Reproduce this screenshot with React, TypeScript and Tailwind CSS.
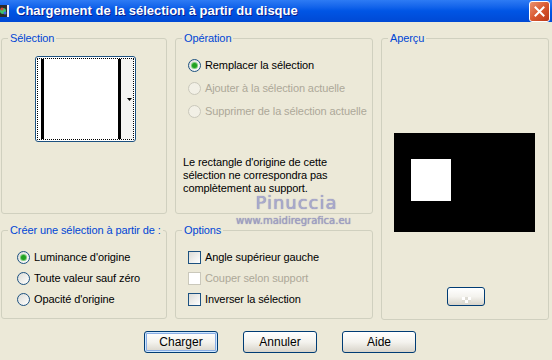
import React from "react";

// XP style "load selection" dialog

const groupBox = "border border-[#D0D0BF] rounded-[3px] m-0 p-0 min-w-0";
const legendCls = "ml-[6px] px-[2px] text-[#0046D5] leading-[14px] whitespace-nowrap";

const Radio: React.FC<{ checked?: boolean; disabled?: boolean }> = ({ checked, disabled }) => (
  <span
    className={
      disabled
        ? "w-[13px] h-[13px] rounded-full border border-[#CAC8BB] bg-[#F2F0E6] shrink-0"
        : "w-[13px] h-[13px] rounded-full border border-[#1C5180] bg-gradient-to-br from-[#DCDCD7] to-white shrink-0 flex items-center justify-center"
    }
  >
    {checked && <span className="w-[5px] h-[5px] rounded-full bg-[#21A121] shadow-[0_0_0_1px_#7BCB7B]" />}
  </span>
);

const Check: React.FC<{ disabled?: boolean }> = ({ disabled }) => (
  <span
    className={
      disabled
        ? "w-[13px] h-[13px] border border-[#CAC8BB] bg-white shrink-0"
        : "w-[13px] h-[13px] border border-[#1C5180] bg-gradient-to-br from-[#DCDCD7] to-white shrink-0"
    }
  />
);

const XpButton: React.FC<{ label: string; isDefault?: boolean }> = ({ label, isDefault }) => (
  <button
    className={
      isDefault
        ? "w-[74px] h-[22px] rounded-[3px] border border-[#003C74] bg-gradient-to-b from-white via-[#F4F3EE] to-[#D8D4CA] shadow-[inset_0_0_0_1px_#CEE7FF,inset_0_0_0_2px_#89ADE4] text-black text-[12px] leading-none"
        : "w-[74px] h-[22px] rounded-[3px] border border-[#003C74] bg-gradient-to-b from-white via-[#F4F3EE] to-[#D8D4CA] text-black text-[12px] leading-none"
    }
  >
    {label}
  </button>
);

export default function App() {
  return (
    <div className="relative w-[552px] h-[360px] overflow-hidden bg-[#ECE9D8] text-[11px] tracking-[-0.1px] text-black font-['Liberation_Sans',Arial,sans-serif] whitespace-nowrap">
      {/* title bar */}
      <div className="h-[22px] flex items-center bg-gradient-to-b from-[#2D7BF4] via-[#0055E5] to-[#0049D4] tracking-normal">
        <svg width="9" height="14" viewBox="0 0 9 14" className="shrink-0">
          <rect x="0" y="1" width="8" height="12" fill="#2a2a2a" />
          <circle cx="3" cy="7" r="3" fill="#3CC36E" />
          <circle cx="2" cy="5" r="1.5" fill="#D8473B" />
          <circle cx="5" cy="9" r="1.5" fill="#3F66E0" />
          <rect x="7" y="1" width="2" height="12" fill="#E8E8F4" />
        </svg>
        <span className="ml-[7px] text-white font-bold text-[13px] [text-shadow:1px_1px_0_#0A1E8C]">
          Chargement de la sélection à partir du disque
        </span>
        <div className="ml-auto mr-[2px] w-[21px] h-[21px] rounded-[3px] border border-white bg-gradient-to-br from-[#E99270] via-[#D9582F] to-[#BC3717] flex items-center justify-center">
          <svg width="11" height="11" viewBox="0 0 11 11">
            <path d="M1.5 1.5 L9.5 9.5 M9.5 1.5 L1.5 9.5" stroke="white" strokeWidth="2" strokeLinecap="square" />
          </svg>
        </div>
      </div>

      {/* groups */}
      <div className="flex gap-[8px] pl-[1px] pt-[9px]">
        <div className="w-[166px] flex flex-col gap-[9px]">
          <fieldset className={`${groupBox} h-[183px]`}>
            <legend className={legendCls}>Sélection</legend>
            <div className="ml-[33px] mt-[11px] relative w-[101px] h-[86px] rounded-[3px] border border-[#1C5180] bg-white flex items-stretch py-[2px] pl-[5px]">
              <div className="w-[3px] bg-black" />
              <div className="w-[74px] bg-white" />
              <div className="w-[3px] bg-black" />
              <div className="flex-1 bg-[#F4F4F2] mr-[2px] flex items-center justify-end pr-[1px]">
                <svg width="5" height="3" viewBox="0 0 5 3">
                  <path d="M0 0 H5 L2.5 3 Z" fill="black" />
                </svg>
              </div>
              <div className="absolute inset-[1px] border border-dotted border-black rounded-[1px]" />
            </div>
          </fieldset>
          <fieldset className={`${groupBox} h-[96px]`}>
            <legend className={legendCls}>Créer une sélection à partir de :</legend>
            <div className="mt-[9px] ml-[15px] flex flex-col">
              <label className="h-[22px] flex items-center gap-[4px]">
                <Radio checked />
                Luminance d'origine
              </label>
              <label className="h-[21px] flex items-center gap-[4px]">
                <Radio />
                Toute valeur sauf zéro
              </label>
              <label className="h-[21px] flex items-center gap-[4px]">
                <Radio />
                Opacité d'origine
              </label>
            </div>
          </fieldset>
        </div>

        <div className="w-[198px] flex flex-col gap-[9px]">
          <fieldset className={`${groupBox} h-[183px]`}>
            <legend className={legendCls}>Opération</legend>
            <div className="mt-[8px] ml-[12px] flex flex-col">
              <label className="h-[24px] flex items-center gap-[4px]">
                <Radio checked />
                Remplacer la sélection
              </label>
              <label className="h-[23px] flex items-center gap-[4px] text-[#ACA899]">
                <Radio disabled />
                Ajouter à la sélection actuelle
              </label>
              <label className="h-[22px] flex items-center gap-[4px] text-[#ACA899]">
                <Radio disabled />
                Supprimer de la sélection actuelle
              </label>
            </div>
            <p className="mt-[34px] ml-[7px] leading-[13px]">
              Le rectangle d'origine de cette
              <br />
              sélection ne correspondra pas
              <br />
              complètement au support.
            </p>
          </fieldset>
          <fieldset className={`${groupBox} h-[96px]`}>
            <legend className={legendCls}>Options</legend>
            <div className="mt-[10px] ml-[12px] flex flex-col">
              <label className="h-[21px] flex items-center gap-[4px]">
                <Check />
                Angle supérieur gauche
              </label>
              <label className="h-[21px] flex items-center gap-[4px] text-[#ACA899]">
                <Check disabled />
                Couper selon support
              </label>
              <label className="h-[21px] flex items-center gap-[4px]">
                <Check />
                Inverser la sélection
              </label>
            </div>
          </fieldset>
        </div>

        <fieldset className={`${groupBox} w-[168px] h-[289px]`}>
          <legend className={legendCls}>Aperçu</legend>
          <div className="ml-[12px] mt-[88px] w-[141px] h-[99px] bg-black pl-[17px] pt-[26px]">
            <div className="w-[40px] h-[42px] bg-white" />
          </div>
          <div className="ml-[65px] mt-[55px] w-[38px] h-[19px] rounded-[3px] border border-[#003C74] bg-gradient-to-b from-white via-[#F4F3EE] to-[#D8D4CA] flex items-end justify-center pb-[2px]">
            <div className="grid grid-cols-3 w-[9px] h-[6px]">
              <span className="bg-white" />
              <span className="bg-[#DEDCD4]" />
              <span className="bg-white" />
              <span className="bg-[#DEDCD4]" />
              <span className="bg-white" />
              <span className="bg-[#DEDCD4]" />
            </div>
          </div>
        </fieldset>
      </div>

      {/* dialog buttons */}
      <div className="flex gap-[25px] pl-[144px] mt-[11px] tracking-normal">
        <XpButton label="Charger" isDefault />
        <XpButton label="Annuler" />
        <XpButton label="Aide" />
      </div>

      {/* watermark */}
      <div className="absolute left-[233px] top-[193px] w-[121px] flex flex-col items-center pointer-events-none tracking-normal">
        <span className="ml-[6px] text-[18px] leading-[20px] tracking-[1px] text-[#A9A9CC] font-['DejaVu_Sans',sans-serif] [text-shadow:0_0_1px_#7C7CA8]">
          Pinuccia
        </span>
        <span className="mt-[3px] text-[10px] leading-[10px] text-[#A0A0C4] font-['DejaVu_Sans',sans-serif] [text-shadow:0_0_1px_#8080A8]">
          www.maidiregrafica.eu
        </span>
      </div>
    </div>
  );
}
